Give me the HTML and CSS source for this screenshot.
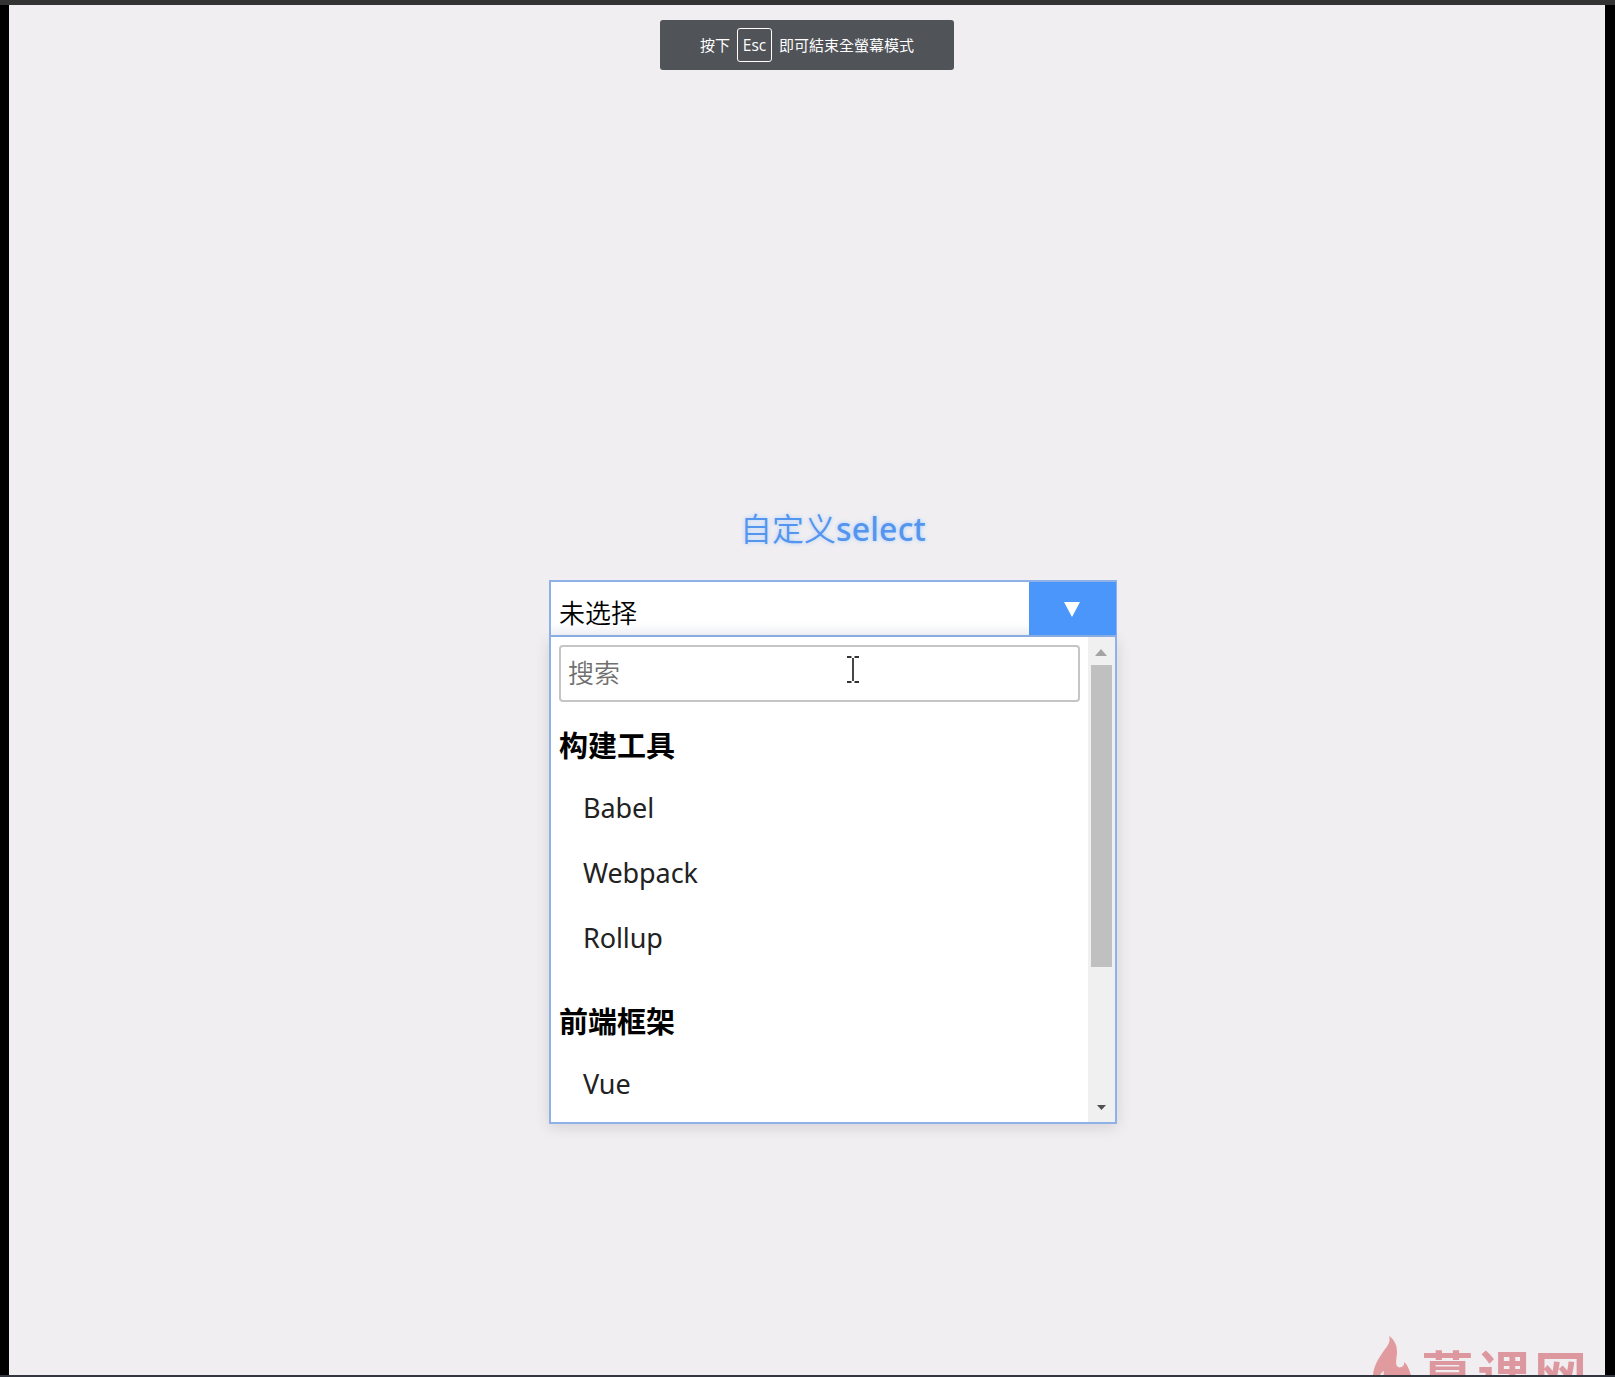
FILE: index.html
```html
<!DOCTYPE html>
<html lang="zh-CN">
<head>
<meta charset="utf-8">
<title>自定义select</title>
<link rel="stylesheet" href="styles.css">
</head>
<body>
<main class="stage">
  <div class="toast" lang="zh-TW"><span>按下</span><kbd class="key">Esc</kbd><span>即可結束全螢幕模式</span></div>
  <section class="demo">
    <h1 class="title">自定义<span class="title-latin">select</span></h1>
    <div class="select">
      <span class="value">未选择</span>
      <span class="toggle"><svg width="16" height="15" viewBox="0 0 16 15"><path d="M0 0h16L8 15z" fill="#fff"/></svg></span>
    </div>
    <div class="panel">
      <div class="options">
        <div class="search">搜索</div>
        <h2 class="group">构建工具</h2>
        <ul class="list"><li>Babel</li><li>Webpack</li><li>Rollup</li></ul>
        <h2 class="group">前端框架</h2>
        <ul class="list"><li>Vue</li></ul>
      </div>
      <div class="scrollbar">
        <svg class="up" width="12" height="7" viewBox="0 0 12 7"><path d="M6 0l6 7H0z" fill="#a3a3a3"/></svg>
        <div class="thumb"></div>
        <svg class="down" width="9" height="5" viewBox="0 0 9 5"><path d="M0 0h9L4.500 5z" fill="#505050"/></svg>
      </div>
    </div>
    <svg class="cursor" width="12" height="27" viewBox="0 0 12 27" fill="none" stroke="#333" stroke-width="1.800"><path d="M0 1h4.500M7.500 1H12M6 2v23M0 26h4.500M7.500 26H12"/></svg>
  </section>
  <div class="watermark">
    <svg class="flame" width="39" height="39" viewBox="0 0 39 39"><path fill="#e19a9d" fill-rule="evenodd" d="M0 39C1 30 5 23 10 16C15 9 18 6 16 0C22 4 24 10 24 16C24 21 22 27 24 30C26 33 32 31 31 26C35 29 36 34 38 39ZM7 39C8 37 9 36 11 35C11 36 10 38 11 39Z"/></svg>
    <span class="brand">慕课网</span>
  </div>
</main>
</body>
</html>
```
FILE: styles.css
```css
* { box-sizing: border-box; }
body {
  margin: 0;
  height: 1377px;
  padding: 5px 10px 2px 9px;
  overflow: hidden;
  background: linear-gradient(#333 5px, #000 5px, #000 1375px, #34363f 1375px);
  font-family: "Noto Sans", "Noto Sans CJK SC", sans-serif;
}
.stage {
  position: relative;
  height: 1370px;
  padding-top: 15px;
  overflow: hidden;
  background: #f0eef1;
}
.toast {
  display: flex;
  align-items: center;
  justify-content: center;
  gap: 7px;
  width: 294px;
  height: 50px;
  margin-left: 651px;
  border-radius: 3px;
  background: #505357;
  color: #fff;
  font: 15px/20px "Noto Sans CJK TC", sans-serif;
}
.key {
  width: 35px;
  height: 34px;
  border: 1px solid #fff;
  border-radius: 3px;
  font: 15.500px/32px "Open Sans", sans-serif;
  text-align: center;
}
.demo {
  position: relative;
  width: 568px;
  margin: 433px 0 0 540px;
}
.title {
  height: 77px;
  margin: 0;
  color: #5495ee;
  font: 350 32px/48px "Noto Sans CJK SC", sans-serif;
  text-align: center;
  text-shadow: 0 0 4px #a9cdff;
}
.title-latin {
  font-family: "Noto Sans", sans-serif;
  font-weight: 500;
  letter-spacing: .2px;
}
.select {
  display: flex;
  height: 57px;
  border: 2px solid #8eb2e8;
  background: linear-gradient(#fff 40px, #f3f4f9);
}
.value {
  flex: 1;
  padding: 4px 8px 0;
  font: 350 26px/52px "Noto Sans CJK SC", sans-serif;
}
.toggle {
  display: flex;
  align-items: center;
  justify-content: center;
  width: 87px;
  padding: 2px 2px 0 0;
  margin-right: -1px;
  background: #4b96fa;
}
.panel {
  display: flex;
  height: 487px;
  border: 2px solid #8eb2e8;
  border-top: 0;
  background: #fff;
  box-shadow: 0 3px 14px rgba(0, 0, 0, .12);
}
.options { flex: 1; padding: 8px 8px 0 8px; }
.search {
  height: 57px;
  padding-left: 7px;
  border: 2px solid #c5c5c7;
  border-radius: 4px;
  color: #707070;
  font: 350 26px/50px "Noto Sans CJK SC", sans-serif;
}
.group {
  height: 73px;
  margin: 0;
  padding-top: 21px;
  font: bold 29px/42px "Noto Sans CJK SC", sans-serif;
}
.list {
  height: 203px;
  margin: 0;
  padding: 0 0 0 24px;
  list-style: none;
  color: #222;
  font-size: 27px;
  letter-spacing: -.1px;
  line-height: 65px;
}
.scrollbar {
  display: flex;
  flex-direction: column;
  align-items: center;
  width: 27px;
  padding: 12px 1px 12px 0;
  background: #f0f0f1;
}
.up { flex: none; }
.thumb {
  flex: none;
  width: 21px;
  height: 302px;
  margin-top: 9px;
  background: #c0c0c0;
}
.down { margin-top: auto; }
.cursor { position: absolute; left: 298px; top: 153px; }
.watermark {
  position: absolute;
  left: 1364px;
  top: 1331px;
  display: flex;
  height: 39px;
}
.brand {
  margin-left: 9px;
  color: #dc989e;
  font: bold 53px/60px "Noto Sans CJK SC", sans-serif;
  letter-spacing: 3.500px;
  padding-top: 7px;
}
```
